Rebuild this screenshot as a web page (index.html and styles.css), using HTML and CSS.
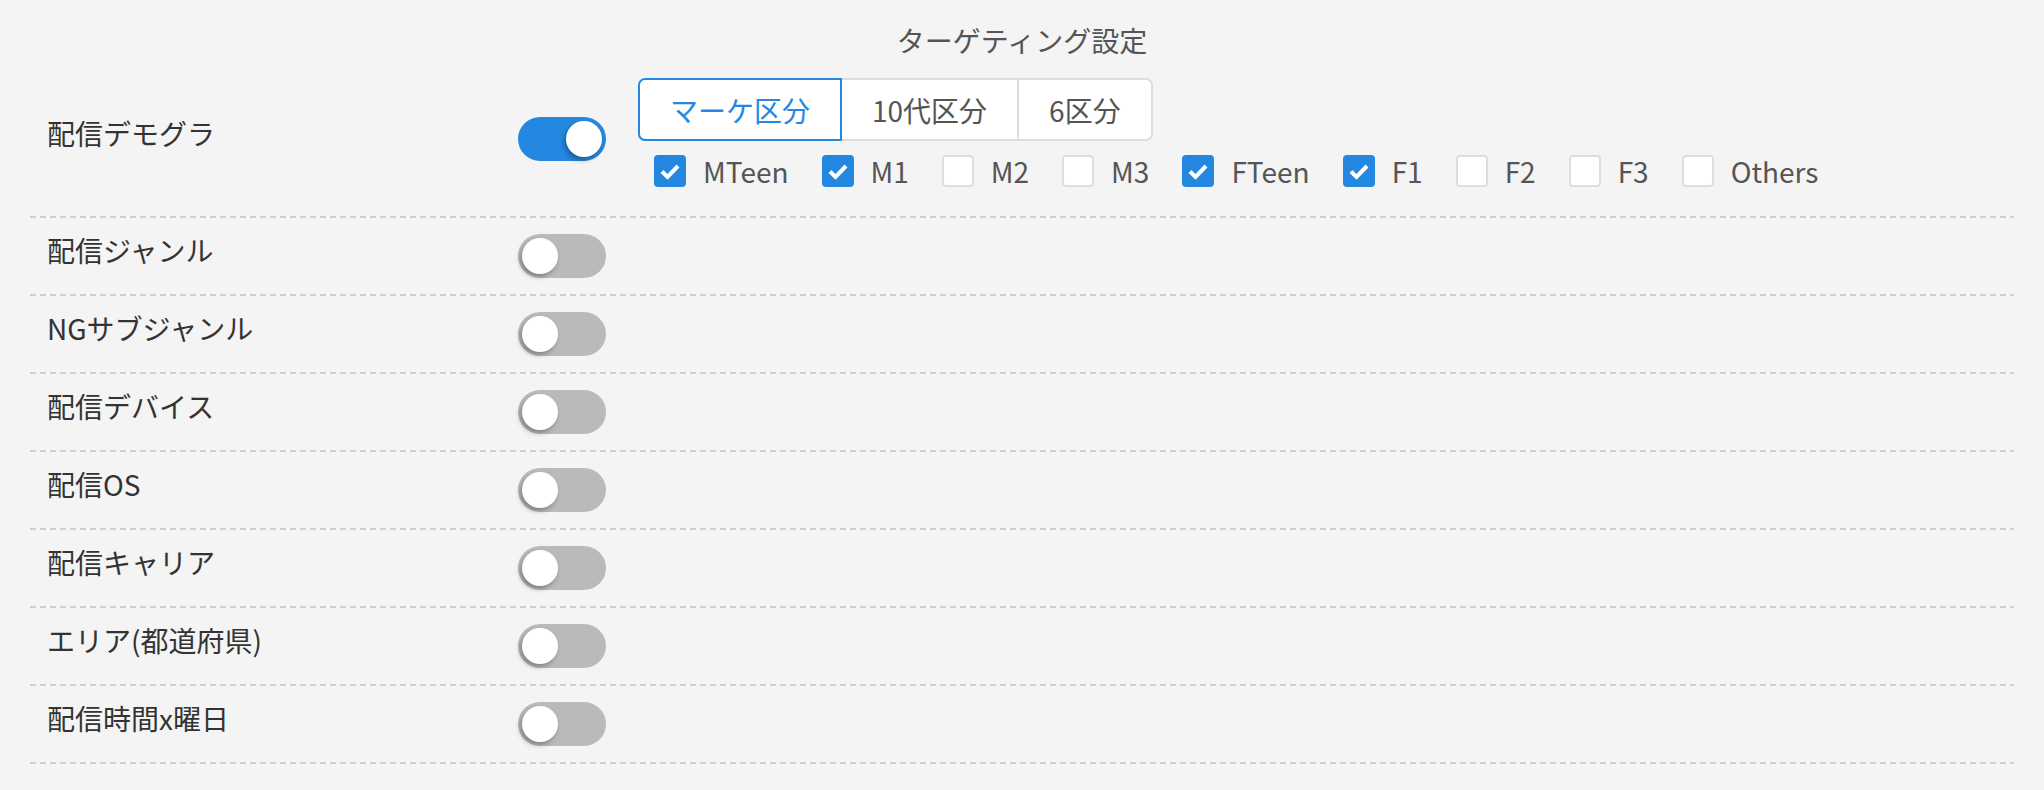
FILE: index.html
```html
<!DOCTYPE html>
<html lang="ja">
<head>
    <meta charset="UTF-8">
    <meta name="viewport" content="width=device-width, initial-scale=1.0">
    <title>ターゲティング設定</title>
    <link rel="stylesheet" href="styles.css">
</head>
<body>
    <div class="settings">
        <div class="title">ターゲティング設定</div>

        <!-- デモグラ -->
        <div class="row row-main">
            <div class="label">配信デモグラ</div>
            <div class="toggle on"></div>
            <div class="options">
                <div class="btn-group">
                    <button class="seg active">マーケ区分</button>
                    <button class="seg">10代区分</button>
                    <button class="seg">6区分</button>
                </div>
                <div class="checks">
                    <label class="check"><span class="box on"><svg viewBox="0 0 32 32"><polyline points="8,16.5 13.5,22 24,11"/></svg></span>MTeen</label>
                    <label class="check"><span class="box on"><svg viewBox="0 0 32 32"><polyline points="8,16.5 13.5,22 24,11"/></svg></span>M1</label>
                    <label class="check"><span class="box"></span>M2</label>
                    <label class="check"><span class="box"></span>M3</label>
                    <label class="check"><span class="box on"><svg viewBox="0 0 32 32"><polyline points="8,16.5 13.5,22 24,11"/></svg></span>FTeen</label>
                    <label class="check"><span class="box on"><svg viewBox="0 0 32 32"><polyline points="8,16.5 13.5,22 24,11"/></svg></span>F1</label>
                    <label class="check"><span class="box"></span>F2</label>
                    <label class="check"><span class="box"></span>F3</label>
                    <label class="check"><span class="box"></span>Others</label>
                </div>
            </div>
        </div>

        <div class="row">
            <div class="label">配信ジャンル</div>
            <div class="toggle"></div>
        </div>
        <div class="row">
            <div class="label">NGサブジャンル</div>
            <div class="toggle"></div>
        </div>
        <div class="row">
            <div class="label">配信デバイス</div>
            <div class="toggle"></div>
        </div>
        <div class="row">
            <div class="label">配信OS</div>
            <div class="toggle"></div>
        </div>
        <div class="row">
            <div class="label">配信キャリア</div>
            <div class="toggle"></div>
        </div>
        <div class="row">
            <div class="label">エリア(都道府県)</div>
            <div class="toggle"></div>
        </div>
        <div class="row">
            <div class="label">配信時間x曜日</div>
            <div class="toggle"></div>
        </div>
    </div>
</body>
</html>
```

FILE: styles.css
```css
body {
    margin: 0;
    background-color: #f4f4f4;
    font-family: "Noto Sans CJK JP", sans-serif;
    font-size: 28px;
    color: #333;
}
.settings {
    margin: 0 30px;
}
.title {
    text-align: center;
    color: #555;
    line-height: 40px;
    margin: 20px 0 1px;
}
/* 各行 */
.row {
    display: grid;
    grid-template-columns: 488px 88px 1fr;
    align-items: center;
    height: 78px;
    padding-bottom: 2px;
    box-sizing: border-box;
    background-image: repeating-linear-gradient(to right, #cfcfcf 0 6px, transparent 6px 10px);
    background-size: 100% 2px;
    background-position: left bottom;
    background-repeat: no-repeat;
}
.row-main {
    height: 157px;
}
.label {
    padding: 0 0 12px 17px;
    line-height: 40px;
}
/* トグル */
.toggle {
    position: relative;
    width: 88px;
    height: 44px;
    border-radius: 22px;
    background-color: #bababa;
}
.toggle::after {
    content: "";
    position: absolute;
    top: 4px;
    left: 4px;
    width: 36px;
    height: 36px;
    border-radius: 50%;
    background-color: #fff;
    box-shadow: -2px 3px 5px rgba(0, 0, 0, 0.3);
}
.toggle.on {
    background-color: #2488e1;
}
.toggle.on::after {
    left: 48px;
}
.options {
    align-self: start;
    margin: 17px 0 0 32px;
}
/* 区分ボタン */
.btn-group {
    display: flex;
}
.seg {
    position: relative;
    height: 63px;
    padding: 0 30px;
    margin-left: -2px;
    font-family: inherit;
    font-size: 28px;
    color: #555;
    background-color: #fff;
    border: 2px solid #ddd;
    border-radius: 0;
}
.seg:first-child {
    margin-left: 0;
    border-radius: 7px 0 0 7px;
}
.seg:last-child {
    border-radius: 0 7px 7px 0;
}
.seg.active {
    z-index: 1;
    color: #2488e1;
    border-color: #2488e1;
}
/* チェックボックス */
.checks {
    display: flex;
    margin-top: 14px;
    color: #555;
}
.check {
    display: flex;
    align-items: center;
    gap: 17px;
    padding: 0 17px 0 16px;
    line-height: 32px;
}
.box {
    width: 32px;
    height: 32px;
    box-sizing: border-box;
    border: 2px solid #ddd;
    border-radius: 4px;
    background-color: #fff;
}
.box.on {
    border: none;
    background-color: #2488e1;
}
.box svg {
    display: block;
    width: 32px;
    height: 32px;
    fill: none;
    stroke: #fff;
    stroke-width: 4;
}
```
